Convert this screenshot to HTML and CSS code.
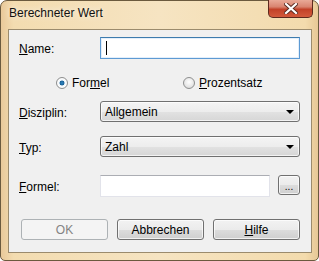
FILE: index.html
```html
<!DOCTYPE html>
<html lang="de">
  <head>
    <meta charset="UTF-8" />
    <title>Berechneter Wert</title>
    <link rel="stylesheet" href="styles.css">
  </head>
  <body>
    <div class="window">
      <div class="titlebar">
        <span class="title">Berechneter Wert</span>
        <div class="close-btn">
          <svg width="14" height="11" viewBox="0 0 14 11">
            <path d="M2 1 L12 10 M12 1 L2 10" stroke="#5a2a20" stroke-width="4" stroke-linecap="square" />
            <path d="M2 1 L12 10 M12 1 L2 10" stroke="#ffffff" stroke-width="2.2" stroke-linecap="square" />
          </svg>
        </div>
      </div>
      <div class="client">
        <div class="row row-name">
          <label class="label"><u>N</u>ame:</label>
          <div class="textbox focused"><span class="caret"></span></div>
        </div>

        <div class="row row-radio">
          <div class="radio-item radio-formel">
            <span class="radio checked"></span>
            <span>For<u>m</u>el</span>
          </div>
          <div class="radio-item">
            <span class="radio"></span>
            <span><u>P</u>rozentsatz</span>
          </div>
        </div>

        <div class="row row-disziplin">
          <label class="label"><u>D</u>isziplin:</label>
          <div class="combo">
            <span>Allgemein</span>
            <span class="arrow"></span>
          </div>
        </div>

        <div class="row row-typ">
          <label class="label"><u>T</u>yp:</label>
          <div class="combo">
            <span>Zahl</span>
            <span class="arrow"></span>
          </div>
        </div>

        <div class="row row-formel">
          <label class="label"><u>F</u>ormel:</label>
          <div class="textbox short"></div>
          <button class="btn dots">...</button>
        </div>

        <div class="row row-buttons">
          <button class="btn wide disabled">OK</button>
          <button class="btn wide">Abbrechen</button>
          <button class="btn wide"><u>H</u>ilfe</button>
        </div>
      </div>
    </div>
  </body>
</html>
```

FILE: styles.css
```css
html, body {
  margin: 0;
  padding: 0;
  background: #ffffff;
}

body {
  font-family: "Liberation Sans", Arial, sans-serif;
  font-size: 12px;
  color: #000;
}

.window {
  width: 319px;
  height: 261px;
  box-sizing: border-box;
  border: 1px solid #6b5a3e;
  border-radius: 7px 7px 5px 5px;
  background: linear-gradient(to right, #e9c99a 0%, #f3dcb0 4%, #f6e4c2 50%, #f3dbad 96%, #e7c896 100%);
  padding: 0 6px 0 7px;
}

.titlebar {
  height: 28px;
  display: flex;
  justify-content: space-between;
  position: relative;
}

.title {
  padding-top: 5px;
  padding-left: 1px;
  font-size: 12px;
  color: #111;
  text-shadow: 0 0 6px rgba(255, 255, 255, 0.9);
}

.close-btn {
  width: 45px;
  height: 18px;
  margin-top: -1px;
  margin-right: -1px;
  box-sizing: border-box;
  border: 1px solid #5e2a1e;
  border-top: none;
  border-radius: 0 0 5px 5px;
  background: linear-gradient(to bottom, #e9a997 0%, #d98470 40%, #c24128 55%, #d35a3c 100%);
  display: flex;
  align-items: center;
  justify-content: center;
}

.client {
  height: 224px;
  box-sizing: border-box;
  border: 1px solid #9b8b6d;
  background: #f0f0f0;
  padding: 7px 0 0 10px;
}

.row {
  display: flex;
  align-items: center;
}

.label {
  width: 81px;
  padding-top: 2px;
}

u {
  text-decoration: underline;
  text-underline-offset: 1px;
}

.row-name {
  height: 22px;
}

.textbox {
  box-sizing: border-box;
  width: 200px;
  height: 22px;
  background: #fff;
  border: 1px solid #abadb3;
  display: flex;
  align-items: center;
  padding-left: 5px;
}

.textbox.focused {
  border: 1px solid #5d9ad3;
  border-top-color: #3d7bad;
  box-shadow: inset 0 0 0 1px #e3effb;
}

.textbox.short {
  width: 170px;
  border-color: #e2e3ea;
  border-top-color: #abadb3;
}

.caret {
  width: 1px;
  height: 14px;
  background: #000;
}

.row-radio {
  margin-top: 17px;
  height: 14px;
  padding-left: 37px;
}

.radio-item {
  display: flex;
  align-items: center;
  gap: 4px;
}

.radio-formel {
  width: 127px;
}

.radio {
  width: 12px;
  height: 12px;
  box-sizing: border-box;
  border-radius: 50%;
  border: 1px solid #8e8f8f;
  background: radial-gradient(circle at 50% 40%, #ffffff 0%, #e6e6e6 60%, #cfcfcf 100%);
}

.radio.checked {
  background: radial-gradient(circle, #2d87c4 0%, #1b5f93 32%, #e9f3fa 38%, #ffffff 60%, #d6d6d6 100%);
}

.row-disziplin {
  margin-top: 11px;
  height: 21px;
}

.row-typ {
  margin-top: 14px;
  height: 21px;
}

.combo {
  box-sizing: border-box;
  width: 200px;
  height: 21px;
  border: 1px solid #707070;
  border-radius: 3px;
  background: linear-gradient(to bottom, #f4f4f4 0%, #ededed 50%, #e2e2e2 51%, #d6d6d6 100%);
  box-shadow: inset 0 0 0 1px rgba(255, 255, 255, 0.7);
  display: flex;
  align-items: center;
  justify-content: space-between;
  padding: 0 5px 0 4px;
}

.arrow {
  width: 0;
  height: 0;
  border-left: 4px solid transparent;
  border-right: 4px solid transparent;
  border-top: 4px solid #000;
}

.row-formel {
  margin-top: 18px;
  height: 22px;
}

.btn {
  box-sizing: border-box;
  font-family: "Liberation Sans", Arial, sans-serif;
  font-size: 12px;
  color: #000;
  height: 21px;
  border: 1px solid #707070;
  border-radius: 3px;
  background: linear-gradient(to bottom, #f2f2f2 0%, #ebebeb 50%, #dddddd 51%, #cfcfcf 100%);
  box-shadow: inset 0 0 0 1px rgba(255, 255, 255, 0.7);
  padding: 0;
}

.dots {
  width: 22px;
  height: 20px;
  margin-left: 8px;
  margin-top: -2px;
  font-size: 10px;
  line-height: 10px;
  padding-top: 4px;
}

.row-buttons {
  margin-top: 22px;
  height: 21px;
  gap: 9px;
  padding-left: 2px;
}

.wide {
  width: 87px;
}

.btn.disabled {
  border-color: #adb2b5;
  background: #f4f4f4;
  color: #838383;
  box-shadow: none;
}
```
